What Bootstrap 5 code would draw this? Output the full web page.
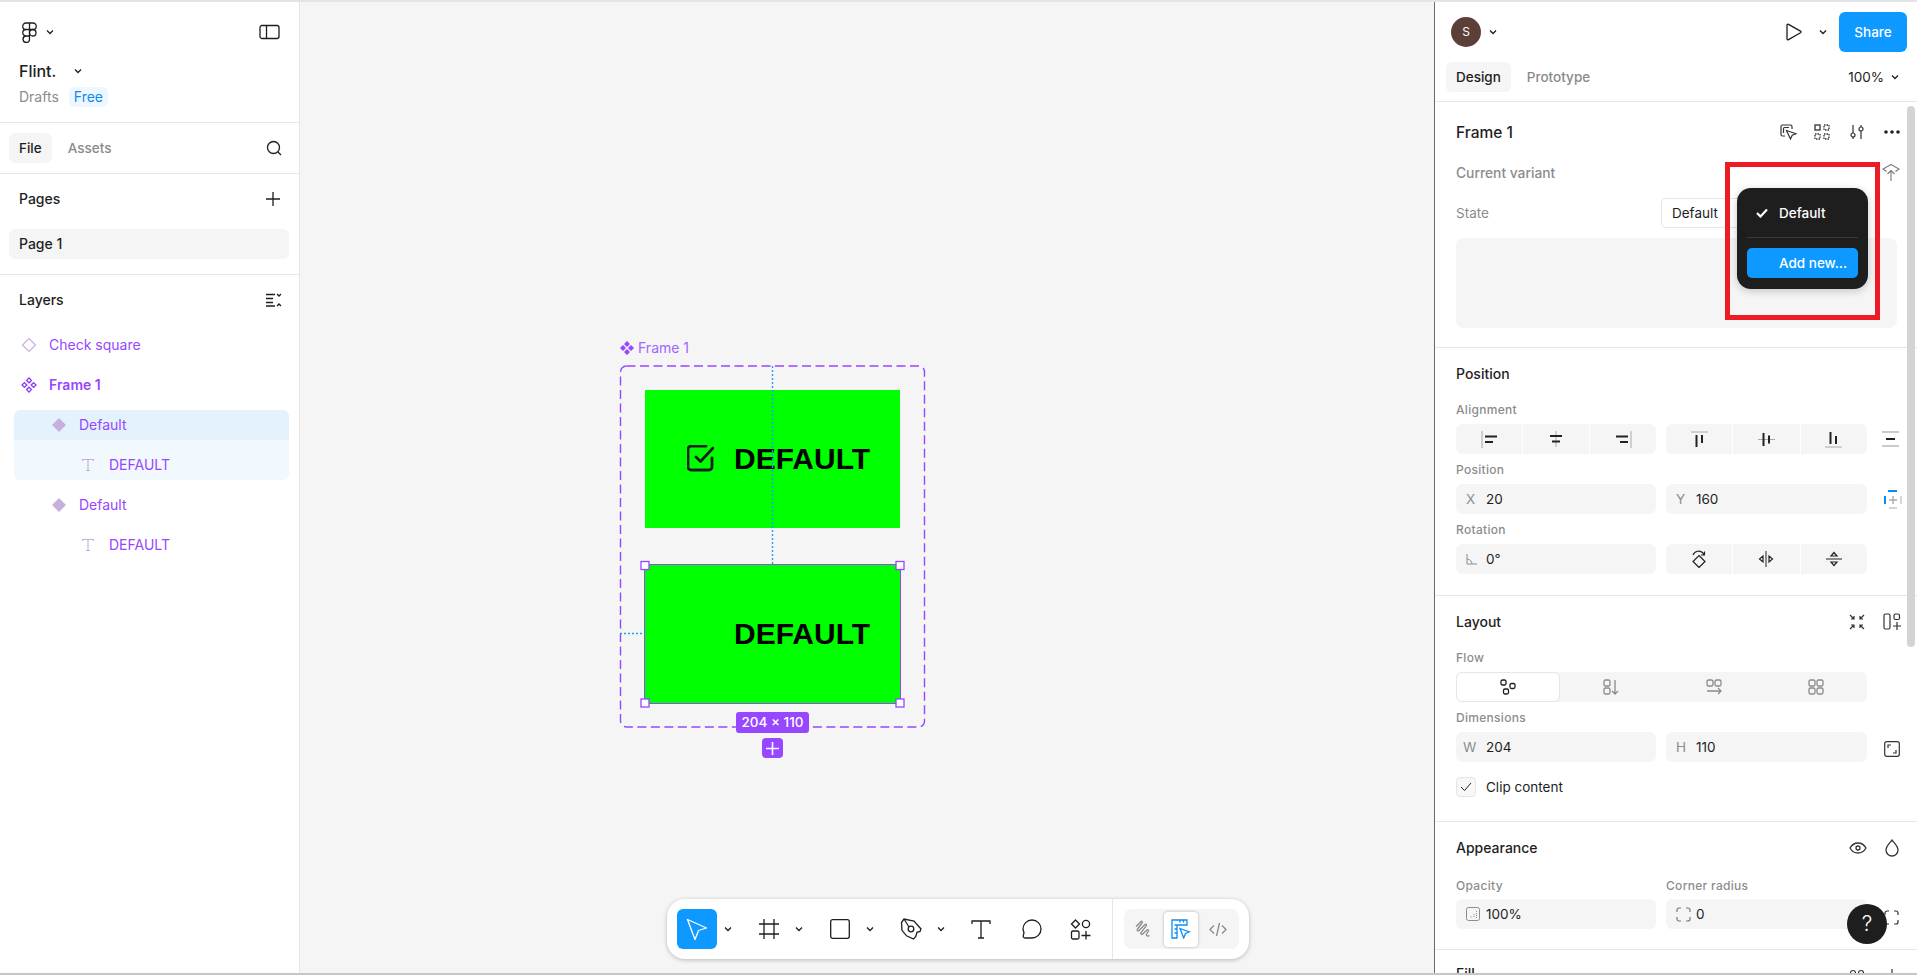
<!DOCTYPE html>
<html>
<head>
  <title>Flint. - Figma</title>
  <link rel="stylesheet" href="https://cdn.jsdelivr.net/npm/bootstrap@5.3.3/dist/css/bootstrap.min.css">
  <style>
    html, body { height: 975px; overflow: hidden; }
    body { font-family: Inter, "Liberation Sans", sans-serif; font-size: 14px; color: #1e1e1e; background: #fff; }
    svg { display: block; flex: none; }
    .ic { fill: none; stroke: currentColor; stroke-width: 1.3; }
    .edge-top { height: 2px; background: #e4e4e4; }
    .edge-bottom { height: 2px; background: #c6c6c6; }
    .shell { height: 971px; }
    .leftbar { width: 300px; border-right: 1px solid #e6e6e6; flex: none; background: #fff; }
    .stage { flex: 1; background: #f5f5f5; position: relative; overflow: hidden; }
    .rightbar { width: 483px; flex: none; border-left: 1px solid #6a6a6a; background: #fff; position: relative; overflow: hidden; }
    .rule { border-bottom: 1px solid #e6e6e6; }
    .ls-head { height: 121px; padding: 20px 19px 0; }
    .ls-tabs { height: 51px; padding: 10px 9px; }
    .ls-pages { height: 101px; padding: 0 10px 0 9px; }
    .tabby { height: 30px; padding: 0 10px; border-radius: 6px; font-weight: 500; font-size: 13.5px; color: #8a8a8a; display: flex; align-items: center; }
    .tabby.on { background: #f5f5f5; color: #1e1e1e; }
    .flint { font-size: 16px; font-weight: 500; line-height: 20px; margin-top: 19px; }
    .muted { color: #8c8c8c; }
    .freechip { background: #eef7ff; color: #0d8cf0; border-radius: 6px; padding: 0 5px; height: 20px; line-height: 20px; margin-left: 10px; }
    .sect-name { font-weight: 500; padding-bottom: 2px; }
    .pagerow { height: 30px; background: #f5f5f5; border-radius: 6px; padding: 0 10px 2px; font-weight: 500; display: flex; align-items: center; margin-top: 5px; }
    .layer { height: 30px; margin-bottom: 10px; color: #9747ff; display: flex; align-items: center; margin-left: 14px; margin-right: 10px; }
    .layer .slot { width: 30px; display: flex; justify-content: center; flex: none; margin-right: 5px; }
    .layer .nm { margin-top: -2px; }
    .lvl1 { padding-left: 30px; }
    .lvl2 { padding-left: 59px; }
    .lvl2 .slot { margin-right: 6px; }
    .sel-a { background: #e4f2fe; border-radius: 6px 6px 0 0; margin-bottom: 0; }
    .sel-b { background: #f1f8fe; border-radius: 0 0 6px 6px; height: 40px; padding-top: 10px; }
    .frame-tag { position: absolute; left: 320px; top: 335px; color: #a066ff; display: flex; align-items: center; gap: 4px; }
    .greenbox { position: absolute; background: #00ff00; display: flex; align-items: center; font-family: "Liberation Sans", Arial, sans-serif; font-weight: 700; font-size: 30px; color: #000; padding-bottom: 2px; }
    .g-one { left: 345px; top: 388px; width: 255px; height: 138px; padding-left: 89px; }
    .g-two { left: 344px; top: 562px; width: 257px; height: 140px; padding-left: 89px; border: 1px solid #9747ff; }
    .g-check { position: absolute; left: 42px; top: 55px; }
    .overlay { position: absolute; left: 0; top: 0; pointer-events: none; }
    .dimtag { position: absolute; left: 436px; top: 710px; width: 73px; height: 21px; border-radius: 3px; background: #9747ff; color: #fff; font-size: 13.5px; font-weight: 500; text-align: center; line-height: 21px; }
    .addtag { position: absolute; left: 462px; top: 736px; width: 21px; height: 20px; border-radius: 4px; background: #9747ff; display: flex; align-items: center; justify-content: center; color: #fff; }
    .dock { position: absolute; left: 367px; top: 897px; width: 582px; height: 60px; background: #fff; border-radius: 18px; box-shadow: 0 1px 4px rgba(0,0,0,.25); padding-left: 10px; display: flex; align-items: center; }
    .dockbtn { width: 40px; height: 40px; display: flex; align-items: center; justify-content: center; flex: none; }
    .dockbtn.on { background: #0d99ff; color: #fff; border-radius: 6px; }
    .dockchev { width: 20px; display: flex; justify-content: center; flex: none; }
    .dockline { width: 1px; height: 60px; background: #e6e6e6; margin-left: 12px; }
    .modes { margin-left: 11px; width: 115px; height: 40px; border-radius: 8px; background: #f5f5f5; display: flex; align-items: center; gap: 3px; padding-left: 3px; color: #8a8a8a; }
    .modebtn { width: 34px; height: 35px; display: flex; align-items: center; justify-content: center; flex: none; }
    .modebtn.on { background: #fff; border-radius: 4px; box-shadow: 0 0 3px rgba(0,0,0,.3); color: #0d8cf0; }
    .rs-top { height: 100px; padding: 10px 10px 0 11px; }
    .avatar { width: 30px; height: 30px; border-radius: 50%; background: #5c4037; color: #fff; font-size: 12px; margin-left: 5px; display: flex; align-items: center; justify-content: center; }
    .sharebtn { width: 68px; height: 40px; background: #0d99ff; color: #fff; border-radius: 6px; font-weight: 500; font-size: 13.5px; display: flex; align-items: center; justify-content: center; }
    .rs-sec { padding: 12px 0 0 21px; }
    .rs-title { height: 26px; font-weight: 500; display: flex; align-items: center; }
    .rs-label { height: 30px; padding-top: 2px; display: flex; align-items: center; color: #8c8c8c; font-size: 12px; font-weight: 500; letter-spacing: .3px; }
    .rs-grid { display: grid; grid-template-columns: 200px 201px; column-gap: 10px; }
    .field { height: 30px; background: #f5f5f5; border-radius: 6px; display: flex; align-items: center; padding-left: 10px; font-size: 13.5px; }
    .field .tag { width: 20px; color: #8c8c8c; flex: none; }
    .segs { display: flex; gap: 1px; height: 30px; border-radius: 6px; overflow: hidden; }
    .segs > div { flex: 1; background: #f5f5f5; display: flex; align-items: center; justify-content: center; }
    .flowbar { display: flex; width: 411px; height: 30px; background: #f5f5f5; border-radius: 6px; color: #8a8a8a; }
    .flowbar > div { flex: 1; display: flex; align-items: center; justify-content: center; }
    .flowbar > div.on { background: #fff; border: 1px solid #e6e6e6; border-radius: 6px; color: #1e1e1e; }
    .sideicon { position: absolute; }
    .tickbox { width: 20px; height: 20px; border: 1px solid #e6e6e6; border-radius: 4px; display: flex; align-items: center; justify-content: center; background: #f8f8f8; }
    .graybox { position: absolute; left: 21px; top: 236px; width: 441px; height: 90px; background: #f5f5f5; border-radius: 8px; }
    .statesel { position: absolute; left: 226px; top: 196px; width: 100px; height: 30px; border: 1px solid #e6e6e6; border-radius: 5px; padding-left: 10px; display: flex; align-items: center; background: #fff; font-size: 13.5px; }
    .redmark { position: absolute; left: 290px; top: 160px; width: 155px; height: 158px; border: 5px solid #ed1c24; }
    .popmenu { position: absolute; left: 302px; top: 186px; width: 131px; height: 101px; background: #1e1e1e; border-radius: 14px; color: #fff; padding: 10px; box-shadow: 0 2px 8px rgba(0,0,0,.2); font-size: 13.5px; }
    .popitem { height: 30px; display: flex; align-items: center; font-weight: 500; }
    .popitem svg { margin: 0 11px 0 9px; }
    .popline { height: 1px; background: #3a3a3a; margin: 9px 0 10px; }
    .popadd { height: 30px; background: #0d99ff; border-radius: 5px; display: flex; align-items: center; padding-left: 32px; font-weight: 500; }
    .scrolly { position: absolute; left: 472px; top: 104px; width: 8px; height: 541px; background: #d4d4d4; border-radius: 4px; }
    .helpdot { position: absolute; left: 412px; top: 902px; width: 40px; height: 40px; border-radius: 50%; background: #1e1e1e; color: #fff; font-size: 21px; font-weight: 300; display: flex; align-items: center; justify-content: center; }
  </style>
</head>
<body>
  <svg width="0" height="0" class="position-absolute">
    <symbol id="chev" viewBox="0 0 8 6"><path d="M1 1.500l3 3 3-3" fill="none" stroke="currentColor" stroke-width="1.300"/></symbol>
    <symbol id="diamond" viewBox="0 0 16 16"><path d="M8 1l7 7-7 7-7-7z" fill="#c7b0e0"/></symbol>
    <symbol id="tee" viewBox="0 0 14 14"><path d="M1.500 3V1.500h11V3M7 1.500v11M5 12.500h4" fill="none" stroke="#c7b0e0" stroke-width="1.100"/></symbol>
  </svg>

  <div class="edge-top"></div>
  <div class="shell d-flex">
    <aside class="leftbar d-flex flex-column">
      <div class="ls-head rule">
        <div class="d-flex align-items-center justify-content-between" style="height:20px">
          <div class="d-flex align-items-center" style="margin-left:2px">
            <svg width="17" height="21" viewBox="0 0 16 21" class="ic">
              <path d="M8 1H4.500a3.250 3.250 0 0 0 0 6.500H8zM8 1h3.500a3.250 3.250 0 0 1 0 6.500H8zM8 7.500H4.500a3.250 3.250 0 0 0 0 6.500H8zM4.500 14H8v3.250a3.250 3.250 0 1 1-3.500-3.250z"/>
              <circle cx="11.250" cy="10.750" r="3.250"/>
            </svg>
            <svg width="8" height="6" class="ms-2"><use href="#chev"/></svg>
          </div>
          <svg width="21" height="16" viewBox="0 0 21 16" class="ic"><rect x="1" y="1.500" width="19" height="13" rx="2"/><path d="M7.500 1.500v13"/></svg>
        </div>
        <div class="d-flex align-items-center flint">Flint.<svg width="8" height="6" style="margin-left:18px"><use href="#chev"/></svg></div>
        <div class="d-flex align-items-center" style="margin-top:5px"><span class="muted">Drafts</span><span class="freechip">Free</span></div>
      </div>
      <div class="ls-tabs rule d-flex align-items-center">
        <div class="tabby on">File</div>
        <div class="tabby ms-2 ps-2">Assets</div>
        <svg width="16" height="16" viewBox="0 0 16 16" class="ic ms-auto" style="margin-right:8px"><circle cx="7.500" cy="7.500" r="6"/><path d="M12 12l3 3"/></svg>
      </div>
      <div class="ls-pages rule">
        <div class="d-flex align-items-center justify-content-between" style="height:50px;padding:0 9px 0 10px">
          <span class="sect-name">Pages</span>
          <svg width="14" height="14" viewBox="0 0 14 14" class="ic"><path d="M7 0v14M0 7h14"/></svg>
        </div>
        <div class="pagerow">Page 1</div>
      </div>
      <div class="d-flex align-items-center justify-content-between" style="height:50px;padding:0 17px 0 19px;margin-bottom:5px">
        <span class="sect-name">Layers</span>
        <svg width="16" height="14" viewBox="0 0 16 14" class="ic"><path d="M0 1.500h9M0 5.500h7M0 9.500h7M0 13h9M11 1l2 2 2-2M11 13l2-2 2 2"/></svg>
      </div>
      <div class="layer">
        <span class="slot"><svg width="16" height="16" viewBox="0 0 16 16"><path d="M8 1.500L14.500 8 8 14.500 1.500 8z" fill="none" stroke="#c7b0e0" stroke-width="1.200"/></svg></span>
        <span class="nm">Check square</span>
      </div>
      <div class="layer fw-semibold">
        <span class="slot"><svg width="16" height="16" viewBox="0 0 16 16" fill="none" stroke="#8a38f5" stroke-width="1.300"><path d="M8 1l2.400 2.400L8 5.800 5.600 3.400zM8 10.200l2.400 2.400L8 15l-2.400-2.400zM3.400 5.600L5.800 8l-2.400 2.400L1 8zM12.600 5.600L15 8l-2.400 2.400L10.200 8z"/></svg></span>
        <span class="nm">Frame 1</span>
      </div>
      <div class="layer lvl1 sel-a">
        <span class="slot"><svg width="16" height="16"><use href="#diamond"/></svg></span>
        <span class="nm">Default</span>
      </div>
      <div class="layer lvl2 sel-b">
        <span class="slot"><svg width="14" height="14"><use href="#tee"/></svg></span>
        <span class="nm">DEFAULT</span>
      </div>
      <div class="layer lvl1">
        <span class="slot"><svg width="16" height="16"><use href="#diamond"/></svg></span>
        <span class="nm">Default</span>
      </div>
      <div class="layer lvl2">
        <span class="slot"><svg width="14" height="14"><use href="#tee"/></svg></span>
        <span class="nm">DEFAULT</span>
      </div>
    </aside>

    <main class="stage">
      <div class="frame-tag">
        <svg width="14" height="14" viewBox="0 0 14 14" fill="#9747ff"><path d="M7 0l3 3-3 3-3-3zM7 8l3 3-3 3-3-3zM3 4l3 3-3 3-3-3zM11 4l3 3-3 3-3-3z"/></svg>
        <span>Frame 1</span>
      </div>
      <div class="greenbox g-one">
        <svg class="g-check" width="27" height="27" viewBox="0 0 27 27" fill="none" stroke="#1e1e1e" stroke-width="2.800" stroke-linecap="round" stroke-linejoin="round"><path d="M25 13v9a3 3 0 0 1-3 3H4a3 3 0 0 1-3-3V4a3 3 0 0 1 3-3h15"/><path d="M9 12l4.500 4.500L26 3"/></svg>
        DEFAULT
      </div>
      <div class="greenbox g-two">DEFAULT</div>
      <svg class="overlay" width="1133" height="971" viewBox="0 0 1133 971">
        <rect x="320.500" y="364" width="304" height="361" rx="6" fill="none" stroke="#9747ff" stroke-width="1.400" stroke-dasharray="9 4.500"/>
        <path d="M472.500 364v199M320 631.500h23" fill="none" stroke="#18a0fb" stroke-width="1.400" stroke-dasharray="2 2"/>
        <g fill="#fff" stroke="#9747ff" stroke-width="1.300">
          <rect x="341" y="559.500" width="8" height="8"/><rect x="596" y="559.500" width="8" height="8"/>
          <rect x="341" y="697" width="8" height="8"/><rect x="596" y="697" width="8" height="8"/>
        </g>
      </svg>
      <div class="dimtag">204 × 110</div>
      <div class="addtag"><svg width="13" height="13" viewBox="0 0 13 13" fill="none" stroke="#fff" stroke-width="1.600"><path d="M6.500 0v13M0 6.500h13"/></svg></div>

      <div class="dock">
        <div class="dockbtn on"><svg width="22" height="23" viewBox="0 0 22 23" fill="none" stroke="#fff" stroke-width="1.300" stroke-linejoin="round"><path d="M1.500 1.500l19 8.500-8 2.500-3.500 9z"/></svg></div>
        <div class="dockchev" style="width:22px"><svg width="8" height="6"><use href="#chev"/></svg></div>
        <div class="dockbtn" style="margin-left:10px"><svg width="20" height="20" viewBox="0 0 20 20" class="ic"><path d="M5 0v20M15 0v20M0 5h20M0 15h20"/></svg></div>
        <div class="dockchev"><svg width="8" height="6"><use href="#chev"/></svg></div>
        <div class="dockbtn" style="margin-left:11px"><svg width="20" height="20" viewBox="0 0 20 20" class="ic"><rect x=".7" y=".7" width="18.600" height="18.600" rx="2"/></svg></div>
        <div class="dockchev"><svg width="8" height="6"><use href="#chev"/></svg></div>
        <div class="dockbtn" style="margin-left:11px"><svg width="22" height="22" viewBox="0 0 22 22" class="ic"><path d="M1.500 4.500L4 1l10 2 7 8-1 2.500-3 .8-1.200 4.200-2.300 2.500-7-3.200-4.500-5.500z"/><circle cx="11" cy="11" r="2.800"/><path d="M4 1l5 8"/></svg></div>
        <div class="dockchev"><svg width="8" height="6"><use href="#chev"/></svg></div>
        <div class="dockbtn" style="margin-left:10px"><svg width="20" height="19" viewBox="0 0 20 19" class="ic"><path d="M1 4V1h18v3M10 1v17M7 18h6"/></svg></div>
        <div class="dockbtn" style="margin-left:11px"><svg width="20" height="20" viewBox="0 0 20 20" class="ic"><path d="M10 1a9 9 0 0 1 9 9 9 9 0 0 1-9 9H3a1.800 1.800 0 0 1-1.800-2L2 13.500A12 12 0 0 1 1 10a9 9 0 0 1 9-9z"/></svg></div>
        <div class="dockbtn" style="margin-left:8px"><svg width="21" height="21" viewBox="0 0 21 21" class="ic"><path d="M5.500 1l4 4-4 4-4-4z"/><circle cx="16" cy="5" r="3.600"/><rect x="1.500" y="12" width="7.500" height="8" rx="1.500"/><path d="M16 12v8.500M11.500 16.500h9"/></svg></div>
        <div class="dockline"></div>
        <div class="modes">
          <div class="modebtn"><svg width="18" height="18" viewBox="0 0 18 18" class="ic"><path d="M1 6.500L6 1.500C7 .8 7.800 1.800 7 3L2.500 9c-1 1.500.3 2.500 1.500 1.500l6-6c1-.8 2 .2 1.200 1.300L6 12.500c-.8 1.300.5 2.300 1.600 1.400L12 10c1.200-.8 2 .4 1.200 1.500l-1.700 2.700c-.7 1.500 1.300 2.500 3 1.300"/></svg></div>
          <div class="modebtn on"><svg width="20" height="20" viewBox="0 0 20 20" class="ic"><path d="M1 1h15v5H6v13H1zM3.500 6h2.500M3.500 10h2.500M3.500 14h2.500M9 1v2.500M12.500 1v2.500"/><path d="M9 9.500l9.500 3.300-4 1.700-1.800 4.500z"/></svg></div>
          <div class="modebtn"><svg width="18" height="15" viewBox="0 0 18 15" class="ic"><path d="M5 3.500L1 7.500l4 4M13 3.500l4 4-4 4M10.500 1L7.500 14"/></svg></div>
        </div>
      </div>
    </main>

    <aside class="rightbar">
      <div class="rs-top rule">
        <div class="d-flex align-items-center" style="height:40px">
          <div class="avatar">S</div>
          <svg width="8" height="6" class="ms-2"><use href="#chev"/></svg>
          <svg width="16" height="18" viewBox="0 0 16 18" class="ic ms-auto" style="margin-right:17px"><path d="M1 2.200c0-.8.8-1.200 1.500-.8l12 6.700c.6.400.6 1.300 0 1.700l-12 6.800c-.7.400-1.500 0-1.500-.8z"/></svg>
          <svg width="8" height="6" style="margin-right:12px"><use href="#chev"/></svg>
          <div class="sharebtn">Share</div>
        </div>
        <div class="d-flex align-items-center" style="height:30px;margin-top:10px">
          <div class="tabby on">Design</div>
          <div class="tabby ps-2" style="margin-left:8px">Prototype</div>
          <span class="ms-auto" style="font-size:13.5px">100%</span>
          <svg width="8" height="6" style="margin:0 8px 0 7px"><use href="#chev"/></svg>
        </div>
      </div>

      <div class="rule" style="height:246px;padding:18px 0 0 21px">
        <div class="rs-title" style="font-size:15.5px">Frame 1</div>
      </div>
      <svg class="sideicon" style="left:345px;top:122px" width="17" height="16" viewBox="0 0 17 16" fill="none" stroke="#333" stroke-width="1.200"><path d="M5 12H2.500A1.500 1.500 0 0 1 1 10.500v-8A1.500 1.500 0 0 1 2.500 1h8A1.500 1.500 0 0 1 12 2.500V5"/><path d="M3.500 9V4.500A1 1 0 0 1 4.500 3.500H9"/><path d="M6.500 6.500l9.500 3.200-3.800 1.600-1.700 3.700z"/></svg>
      <svg class="sideicon" style="left:379px;top:122px" width="16" height="16" viewBox="0 0 16 16" fill="none" stroke="#333" stroke-width="1.300"><rect x="1" y="1" width="5" height="5"/><rect x="10" y="1" width="5" height="5" stroke-dasharray="1.500 1"/><rect x="1" y="10" width="5" height="5" stroke-dasharray="1.500 1"/><rect x="10" y="10" width="5" height="5" stroke-dasharray="1.500 1"/></svg>
      <svg class="sideicon" style="left:414px;top:122px" width="16" height="16" viewBox="0 0 16 16" fill="none" stroke="#333" stroke-width="1.200"><path d="M4 1v8M4 13v2M12 1v2M12 7v8"/><circle cx="4" cy="11" r="2"/><circle cx="12" cy="5" r="2"/></svg>
      <svg class="sideicon" style="left:449px;top:128px" width="16" height="4" viewBox="0 0 16 4" fill="#222"><circle cx="2" cy="2" r="1.800"/><circle cx="8" cy="2" r="1.800"/><circle cx="14" cy="2" r="1.800"/></svg>
      <span class="position-absolute muted fw-medium" style="left:21px;top:161px;font-size:13.8px">Current variant</span>
      <svg class="sideicon" style="left:447px;top:162px" width="18" height="18" viewBox="0 0 18 18" fill="none" stroke="#777" stroke-width="1.100"><path d="M4.500 7.500L1 5 9 .5 17 5l-3.500 2.500M9 17V7M5.500 10L9 6.500l3.500 3.500"/></svg>
      <span class="position-absolute muted" style="left:21px;top:201px;font-size:13.5px">State</span>
      <div class="statesel">Default</div>
      <div class="graybox"></div>
      <div class="popmenu">
        <div class="popitem"><svg width="12" height="10" viewBox="0 0 12 10" fill="none" stroke="#fff" stroke-width="2.200"><path d="M1 5l3.500 3.500L11 1.500"/></svg>Default</div>
        <div class="popline"></div>
        <div class="popadd">Add new...</div>
      </div>
      <div class="redmark"></div>

      <div class="rs-sec rule" style="height:248px">
        <div class="rs-title mb-2">Position</div>
        <div class="rs-label">Alignment</div>
        <div class="rs-grid">
          <div class="segs">
            <div><svg width="17" height="17" viewBox="0 0 17 17" fill="none" stroke="#222" stroke-width="2"><path d="M1 0v17" stroke="#aaa" stroke-width="1"/><path d="M4 5.500h12M4 11h8"/></svg></div>
            <div><svg width="16" height="16" viewBox="0 0 16 16" fill="none" stroke="#222" stroke-width="2"><path d="M8 0v16" stroke="#aaa" stroke-width="1"/><path d="M2 5h12M4 10.500h8"/></svg></div>
            <div><svg width="17" height="17" viewBox="0 0 17 17" fill="none" stroke="#222" stroke-width="2"><path d="M16 0v17" stroke="#aaa" stroke-width="1"/><path d="M1 5.500h12M5 11h8"/></svg></div>
          </div>
          <div class="segs">
            <div><svg width="17" height="17" viewBox="0 0 17 17" fill="none" stroke="#222" stroke-width="2"><path d="M0 1h17" stroke="#aaa" stroke-width="1"/><path d="M5.500 4v12M11 4v8"/></svg></div>
            <div><svg width="17" height="17" viewBox="0 0 17 17" fill="none" stroke="#222" stroke-width="2"><path d="M0 8.500h17" stroke="#aaa" stroke-width="1"/><path d="M5.500 2v13M11 4.500v8"/></svg></div>
            <div><svg width="17" height="17" viewBox="0 0 17 17" fill="none" stroke="#222" stroke-width="2"><path d="M0 16h17" stroke="#aaa" stroke-width="1"/><path d="M5.500 1v12M11 5v8"/></svg></div>
          </div>
        </div>
        <svg class="sideicon" style="left:447px;top:429px" width="17" height="16" viewBox="0 0 17 16" fill="none" stroke="#bbb" stroke-width="1.300"><path d="M0 1h17M0 15h17"/><path d="M4 8h9" stroke="#222" stroke-width="2"/></svg>
        <div class="rs-label">Position</div>
        <div class="rs-grid">
          <div class="field"><span class="tag">X</span><span>20</span></div>
          <div class="field"><span class="tag">Y</span><span>160</span></div>
        </div>
        <svg class="sideicon" style="left:449px;top:488px" width="18" height="20" viewBox="0 0 18 20" fill="none" stroke="#c8c8c8" stroke-width="1.400"><path d="M5 10h8M9 6v8" stroke="#aaa"/><path d="M4 1h9" stroke="#0d8cf0" stroke-width="2"/><path d="M1 6v8" stroke="#0d8cf0" stroke-width="2"/><path d="M17 6v8M5 18h8"/></svg>
        <div class="rs-label">Rotation</div>
        <div class="rs-grid">
          <div class="field"><span class="tag"><svg width="11" height="11" viewBox="0 0 11 11" fill="none" stroke="#8c8c8c"><path d="M1 0v10h10M1 5a5 5 0 0 1 5 5"/></svg></span><span>0°</span></div>
          <div class="segs">
            <div><svg width="16" height="18" viewBox="0 0 16 18" fill="none" stroke="#222" stroke-width="1.200"><path d="M8 5.500L14 11.500 8 17.500 2 11.500zM2 5a6 6 0 0 1 10-2l1 2M13.500 1.500V5H10"/></svg></div>
            <div><svg width="16" height="16" viewBox="0 0 16 16" fill="none" stroke="#222" stroke-width="1.200"><path d="M8 0v16" stroke-width="1"/><path d="M5 5v6L1.500 8zM11 5v6l3.500-3z"/></svg></div>
            <div><svg width="16" height="16" viewBox="0 0 16 16" fill="none" stroke="#222" stroke-width="1.200"><path d="M0 8h16" stroke-width="1"/><path d="M5 5h6L8 1.500zM5 11h6l-3 3.500z"/></svg></div>
          </div>
        </div>
      </div>

      <div class="rs-sec rule" style="height:226px">
        <div class="rs-title">Layout</div>
        <svg class="sideicon" style="left:414px;top:612px" width="16" height="16" viewBox="0 0 16 16" fill="none" stroke="#333" stroke-width="1.200"><path d="M1 1l4 4M5 2v3H2M15 1l-4 4M11 2v3h3M1 15l4-4M5 14v-3H2M15 15l-4-4M11 14v-3h3"/></svg>
        <svg class="sideicon" style="left:448px;top:611px" width="18" height="18" viewBox="0 0 18 18" fill="none" stroke="#333" stroke-width="1.200"><rect x="1" y="1" width="6" height="15" rx="1.500"/><rect x="11" y="1" width="5.500" height="5.500" rx="1.500"/><path d="M14 9v8M10 13h8"/></svg>
        <div class="rs-label mt-2">Flow</div>
        <div class="flowbar">
          <div class="on"><svg width="16" height="16" viewBox="0 0 16 16" class="ic"><rect x="1" y="1" width="5" height="5" rx="1.500"/><rect x="10" y="4.500" width="5" height="5" rx="1.500"/><rect x="3.500" y="10" width="5" height="5" rx="1.500"/></svg></div>
          <div><svg width="16" height="16" viewBox="0 0 16 16" class="ic"><rect x="1" y="1" width="6" height="6" rx="1.500"/><rect x="1" y="9" width="6" height="6" rx="1.500"/><path d="M12 1v14M9 12l3 3 3-3"/></svg></div>
          <div><svg width="16" height="16" viewBox="0 0 16 16" class="ic"><rect x="1" y="1" width="6" height="6" rx="1.500"/><rect x="9" y="1" width="6" height="6" rx="1.500"/><path d="M1 12h14M12 9l3 3-3 3"/></svg></div>
          <div><svg width="16" height="16" viewBox="0 0 16 16" class="ic"><rect x="1" y="1" width="6" height="6" rx="1.500"/><rect x="9" y="1" width="6" height="6" rx="1.500"/><rect x="1" y="9" width="6" height="6" rx="1.500"/><rect x="9" y="9" width="6" height="6" rx="1.500"/></svg></div>
        </div>
        <div class="rs-label">Dimensions</div>
        <div class="rs-grid">
          <div class="field" style="padding-left:7px"><span class="tag" style="width:23px">W</span><span>204</span></div>
          <div class="field"><span class="tag">H</span><span>110</span></div>
        </div>
        <svg class="sideicon" style="left:449px;top:739px" width="16" height="16" viewBox="0 0 16 16" fill="none" stroke="#333" stroke-width="1.200"><rect x=".7" y=".7" width="14.600" height="14.600" rx="2"/><path d="M4 7V4h3M12 9v3H9"/></svg>
        <div class="d-flex align-items-center" style="gap:10px;margin-top:15px">
          <div class="tickbox"><svg width="12" height="10" viewBox="0 0 12 10" fill="none" stroke="#222" stroke-width="1"><path d="M1 5l3.500 3.500L11 1"/></svg></div>
          <span style="font-size:13.5px">Clip content</span>
        </div>
      </div>

      <div class="rs-sec rule" style="height:128px">
        <div class="rs-title">Appearance</div>
        <svg class="sideicon" style="left:414px;top:839px" width="18" height="14" viewBox="0 0 18 14" fill="none" stroke="#333" stroke-width="1.300"><path d="M1 7c2-3.500 5-5 8-5s6 1.500 8 5c-2 3.500-5 5-8 5s-6-1.500-8-5z"/><circle cx="9" cy="7" r="2"/></svg>
        <svg class="sideicon" style="left:450px;top:837px" width="14" height="18" viewBox="0 0 14 18" fill="none" stroke="#333" stroke-width="1.300"><path d="M7 1c2 3 6 6 6 10a6 6 0 0 1-12 0c0-4 4-7 6-10z"/></svg>
        <div class="rs-grid" style="margin-top:10px">
          <div class="rs-label" style="height:29px;padding-top:3px">Opacity</div>
          <div class="rs-label" style="height:29px;padding-top:3px">Corner radius</div>
          <div class="field"><span class="tag"><svg width="14" height="14" viewBox="0 0 14 14" fill="none" stroke="#8c8c8c"><rect x=".5" y=".5" width="13" height="13" rx="2"/><path d="M10.500 4v7M8 7v4M5 9.500v1.500" stroke-dasharray="1 1"/></svg></span><span>100%</span></div>
          <div class="field"><span class="tag"><svg width="15" height="15" viewBox="0 0 15 15" fill="none" stroke="#777" stroke-width="1.200"><path d="M1 5V3a2 2 0 0 1 2-2h2M10 1h2a2 2 0 0 1 2 2v2M14 10v2a2 2 0 0 1-2 2h-2M5 14H3a2 2 0 0 1-2-2v-2"/></svg></span><span>0</span></div>
        </div>
        <svg class="sideicon" style="left:449px;top:908px" width="15" height="15" viewBox="0 0 15 15" fill="none" stroke="#333" stroke-width="1.200"><path d="M1 5V3a2 2 0 0 1 2-2h2M10 1h2a2 2 0 0 1 2 2v2M14 10v2a2 2 0 0 1-2 2h-2M5 14H3a2 2 0 0 1-2-2v-2"/></svg>
      </div>
      <div class="rs-sec rs-title" style="height:30px;padding-top:16px">Fill</div>
      <svg class="sideicon" style="left:414px;top:967px" width="16" height="16" viewBox="0 0 16 16" fill="none" stroke="#333" stroke-width="1.200"><circle cx="4" cy="4" r="2.500"/><circle cx="12" cy="4" r="2.500"/></svg>
      <svg class="sideicon" style="left:450px;top:967px" width="14" height="14" viewBox="0 0 14 14" fill="none" stroke="#333" stroke-width="1.200"><path d="M7 0v14"/></svg>
      <div class="scrolly"></div>
      <div class="helpdot">?</div>
    </aside>
  </div>
  <div class="edge-bottom"></div>
</body>
</html>
